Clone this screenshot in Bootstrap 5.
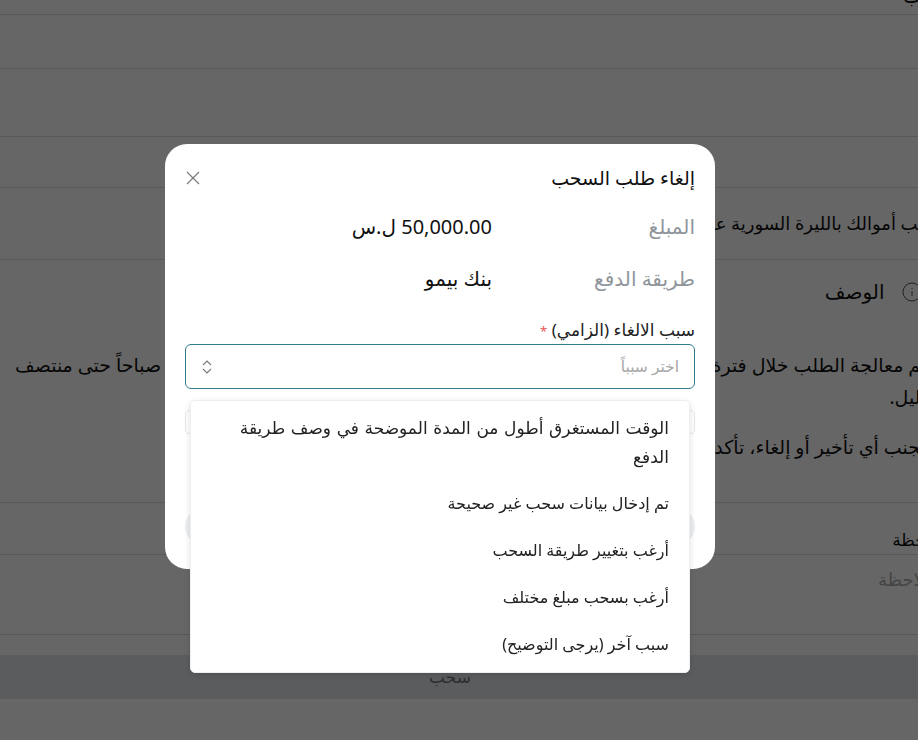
<!DOCTYPE html>
<html lang="ar" dir="rtl">
<head>
<meta charset="utf-8">
<title>إلغاء طلب السحب</title>
<link href="https://cdn.jsdelivr.net/npm/bootstrap@5.3.0/dist/css/bootstrap.min.css" rel="stylesheet">
<style>
html,body{height:740px;overflow:hidden;}
body{font-family:"Noto Sans","DejaVu Sans",sans-serif;background:#fff;color:#111;font-size:19px;}
.page-under{height:740px;overflow:hidden;}
.under-row{border-bottom:1px solid #dcdcdc;overflow:hidden;white-space:nowrap;}
.r1{height:15px;}.r2{height:54px;}.r3{height:68px;}.r4{height:51px;}
.r5{height:72px;align-items:center;font-size:18px;}
.r6{height:243px;}.r7{height:52px;font-size:17px;padding-bottom:2px;}.r8{height:80px;font-size:18px;padding-top:11px;}
.bleed{margin-right:-14px;}
.wide-clip{margin-right:-32px;}
.top-clip{margin-right:-32px;margin-top:-18px;display:block;}
.note-clip{margin-right:-27px;}
.hint-clip{margin-right:-16px;}
.head-line{height:64px;font-size:20px;}
.desc-line{height:32px;line-height:32px;}
.desc-first{margin-top:25px;padding-left:15px;}
.desc-last{margin-top:18px;}
.info-ic{width:22px;height:22px;margin-right:-4.5px;margin-left:16px;}
.under-btn{height:44px;margin-top:20px;background:#e3e5e8;}
.under-btn-text{color:#777;line-height:44px;font-size:17px;padding-right:18px;}
.muted-ph{color:#aaa;}
.shade{position:fixed;inset:0;background:rgba(0,0,0,.6);}
.dialog{position:fixed;left:165px;top:144px;width:550px;height:425px;background:#fff;border-radius:22px;padding:11px 20px 0;}
.dialog-title{height:46px;}
.dialog-title h1{font-size:19px;font-weight:400;margin:0;color:#111;}
.close-x{width:16px;height:16px;}
.info-pair{height:52px;align-items:center;}
.pair-key{width:203px;color:#8f959b;font-size:20px;}
.pair-val{font-size:20px;color:#111;}
.reason-label{font-size:17px;line-height:20px;margin-top:15px;color:#222;}
.req{color:#e55;font-size:13px;}
.picker{height:45px;margin-top:3px;border:1px solid #2f7d8c;border-radius:6px;padding:0 15px 0 14px;color:#a7a7a7;font-size:15.5px;}
.chev{width:14px;height:20px;}
.ghost-field{height:24px;margin-top:21px;border:1px solid #e5e7ea;border-radius:4px;}
.ghost-btn{height:37px;margin-top:74px;background:#eceef0;border-radius:19px;}
.menu-pop{position:fixed;left:190px;top:400px;width:500px;height:273px;background:#fff;border:1px solid #eceeef;border-radius:5px;box-shadow:0 2px 6px rgba(0,0,0,.12);padding:3px 20px 0 20px;font-size:16px;color:#222;list-style:none;margin:0;}
.menu-pop li{height:47px;line-height:47px;}
.menu-pop li.two{height:76px;line-height:29px;padding:9px 0 0 20px;font-size:17px;word-spacing:1.2px;}
</style>
</head>
<body>
<div class="page-under">
  <div class="under-row r1"><span class="top-clip">سحب</span></div>
  <div class="under-row r2"></div>
  <div class="under-row r3"></div>
  <div class="under-row r4"></div>
  <div class="under-row r5 d-flex"><span class="wide-clip">اسحب أموالك بالليرة السورية عبر</span></div>
  <div class="under-row r6">
    <div class="head-line d-flex align-items-center">
      <svg class="info-ic" viewBox="0 0 22 22" fill="none" stroke="#555" stroke-width="1"><circle cx="11" cy="11" r="9"/><path d="M11 10v5M11 7v1"/></svg>
      <span>الوصف</span>
    </div>
    <div class="desc-line desc-first d-flex justify-content-between"><span class="bleed">يتم معالجة الطلب خلال فترة</span><span>صباحاً حتى منتصف</span></div>
    <div class="desc-line"><span class="bleed d-inline-block">الليل.</span></div>
    <div class="desc-line desc-last"><span class="bleed d-inline-block">لتجنب أي تأخير أو إلغاء، تأكد</span></div>
  </div>
  <div class="under-row r7 d-flex align-items-end"><span class="note-clip">ملاحظة</span></div>
  <div class="under-row r8"><span class="hint-clip d-inline-block muted-ph">ملاحظة</span></div>
  <div class="under-btn text-center"><span class="under-btn-text">سحب</span></div>
</div>
<div class="shade"></div>
<div class="dialog" role="dialog">
  <div class="dialog-title d-flex justify-content-between align-items-center">
    <h1>إلغاء طلب السحب</h1>
    <svg class="close-x" viewBox="0 0 16 16" fill="none" stroke="#777" stroke-width="1.1"><path d="M2 2l12 12M14 2L2 14"/></svg>
  </div>
  <div class="info-pair d-flex"><span class="pair-key">المبلغ</span><span class="pair-val">50,000.00 ل.س</span></div>
  <div class="info-pair d-flex"><span class="pair-key">طريقة الدفع</span><span class="pair-val">بنك بيمو</span></div>
  <div class="reason-label">سبب الالغاء (الزامي) <span class="req">*</span></div>
  <div class="picker d-flex justify-content-between align-items-center">
    <span>اختر سبباً</span>
    <svg class="chev" viewBox="0 0 14 20" fill="none" stroke="#777" stroke-width="1.1"><path d="M3 8l4-4 4 4M3 12l4 4 4-4"/></svg>
  </div>
  <div class="ghost-field"></div>
  <div class="ghost-btn"></div>
</div>
<ul class="menu-pop">
  <li class="two">الوقت المستغرق أطول من المدة الموضحة في وصف طريقة الدفع</li>
  <li>تم إدخال بيانات سحب غير صحيحة</li>
  <li>أرغب بتغيير طريقة السحب</li>
  <li>أرغب بسحب مبلغ مختلف</li>
  <li>سبب آخر (يرجى التوضيح)</li>
</ul>
<script src="https://cdn.jsdelivr.net/npm/bootstrap@5.3.0/dist/js/bootstrap.bundle.min.js"></script>
</body>
</html>
